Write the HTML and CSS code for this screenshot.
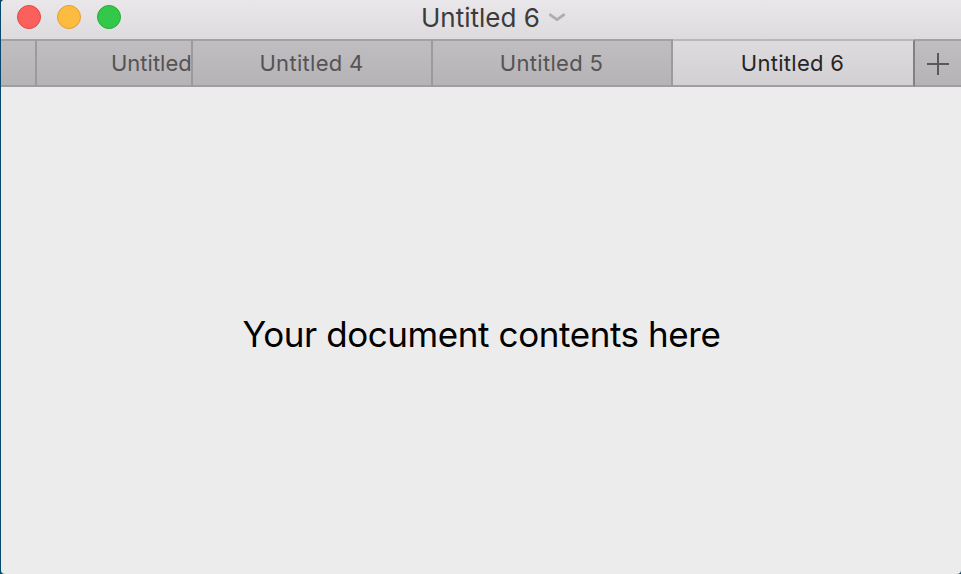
FILE: index.html
```html
<!DOCTYPE html>
<html lang="en">
<head>
<meta charset="utf-8">
<title>Untitled 6</title>
<link rel="stylesheet" href="styles.css">
</head>
<body>
<div class="window">
  <header class="titlebar">
    <div class="controls"><span class="light close"></span><span class="light minimize"></span><span class="light zoom"></span></div>
    <div class="title"><span class="title-text">Untitled 6</span>
      <svg class="chevron" width="16" height="10" viewBox="0 0 16 10"><path d="M1.3 1.8 8 6.6l6.7-4.8" fill="none" stroke="#aeacaf" stroke-width="2.8" stroke-linecap="round" stroke-linejoin="round"/></svg>
    </div>
  </header>
  <nav class="tabs">
    <div class="tab stub"></div>
    <div class="tab clipped"><span>Untitled</span></div>
    <div class="tab"><span>Untitled 4</span></div>
    <div class="tab"><span>Untitled 5</span></div>
    <div class="tab active"><span>Untitled 6</span></div>
    <div class="add"><svg width="24" height="24" viewBox="0 0 24 24"><path d="M12 1v22M1 12h22" stroke="#5a595a" stroke-width="2"/></svg></div>
  </nav>
  <main class="content"><p>Your document contents here</p></main>
</div>
</body>
</html>
```
FILE: styles.css
```css
* { box-sizing: border-box; }
body { margin: 0; background: #07496b; font-family: Inter, sans-serif; }
.window { width: 960px; height: 574px; margin-left: 1px; background: #ececec; border-radius: 4px 0 4px 4px; overflow: hidden; display: flex; flex-direction: column; }
.titlebar { height: 39px; flex: none; display: grid; grid-template-columns: 420px 1fr; background: linear-gradient(#e9e7e9, #dddbdd); }
.controls { display: flex; gap: 16px; padding: 5px 0 0 16px; }
.light { width: 24px; height: 24px; border-radius: 50%; border: 1px solid; }
.close { background: #fc605c; border-color: #df4744; }
.minimize { background: #fdbc40; border-color: #de9f34; }
.zoom { background: #34c84a; border-color: #27aa35; }
.title { display: flex; align-items: center; height: 35px; gap: 9px; color: #3c3b3c; font-size: 26px; }
.title-text { white-space: nowrap; }
.tabs { height: 48px; flex: none; display: grid; grid-template-columns: 36px 156px 240px 240px 242px 1fr; background: linear-gradient(#c0bec0, #b5b3b5); }
.tab, .add { border-top: 2px solid #a3a1a4; border-bottom: 2px solid #a09ea0; }
.tab { display: flex; align-items: center; justify-content: center; overflow: hidden; border-right: 2px solid #9c9a9c; color: #555355; font-size: 22px; letter-spacing: 0.3px; white-space: nowrap; }
.tab:not(.clipped) span { margin-right: 1px; }
.clipped { justify-content: flex-start; padding-left: 74px; letter-spacing: 0; }
.active { background: linear-gradient(#dddbdd, #d2d0d2); color: #262526; border-top-color: #bab8bb; border-right-color: #828083; }
.add { display: flex; align-items: center; justify-content: center; padding-top: 2px; }
.content { flex: 1; display: flex; align-items: center; justify-content: center; }
.content p { margin: 6px 0 0 1px; font-size: 35px; letter-spacing: -0.42px; color: #000; white-space: nowrap; }
```
